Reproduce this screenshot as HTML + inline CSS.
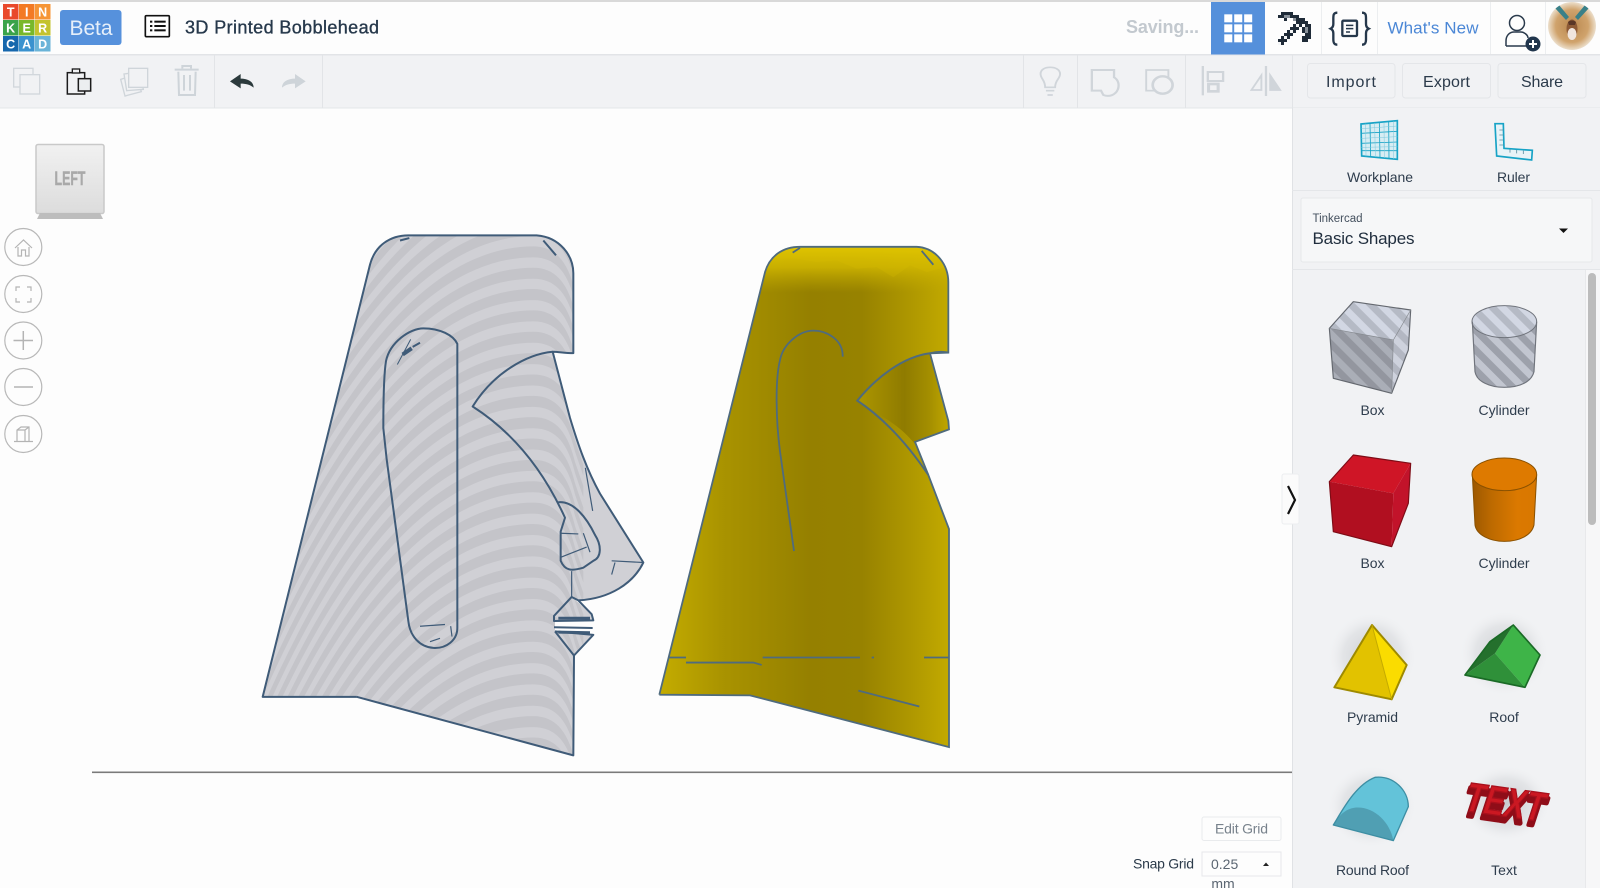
<!DOCTYPE html>
<html>
<head>
<meta charset="utf-8">
<title>3D Printed Bobblehead</title>
<style>
html,body{margin:0;padding:0;width:1600px;height:888px;overflow:hidden;background:#fdfdfd}
svg{display:block;position:absolute;left:0;top:0}
text{font-family:"Liberation Sans",sans-serif}
</style>
</head>
<body>
<svg width="1600" height="888" viewBox="0 0 1600 888" xmlns="http://www.w3.org/2000/svg">
<defs>
  <path id="band" d="M-100,1180C130,560 450,0 850,0C920,0 955,50 975,130L1000,200L1000,232L975,162C955,80 920,32 850,32C450,32 130,592 -100,1212Z"/>
  <clipPath id="greyClip"><path d="M38,1370L360,115C375,60 420,30 475,30L860,30C930,35 970,90 970,140L970,372C945,372 925,368 908,368L960,560C985,640 1010,710 1050,780L1180,980C1150,1040 1080,1085 985,1090L965,1080L1025,1130L1030,1148L915,1150L915,1180L1030,1190L972,1250L970,1540L320,1370Z"/></clipPath>
  <linearGradient id="yel" gradientUnits="userSpaceOnUse" x1="28" y1="0" x2="897" y2="0">
    <stop offset="0" stop-color="#c4ac00"/><stop offset=".22" stop-color="#a99300"/><stop offset=".52" stop-color="#958000"/><stop offset=".7" stop-color="#978200"/><stop offset=".88" stop-color="#b09900"/><stop offset="1" stop-color="#c2aa00"/>
  </linearGradient>
  <linearGradient id="cap" x1="0" y1="0" x2="0" y2="1">
    <stop offset="0" stop-color="#e0c500"/><stop offset=".45" stop-color="#d0b600" stop-opacity=".85"/><stop offset="1" stop-color="#c0a800" stop-opacity="0"/>
  </linearGradient>
  <linearGradient id="sock" gradientUnits="userSpaceOnUse" x1="630" y1="0" x2="895" y2="0">
    <stop offset="0" stop-color="#ab9500"/><stop offset=".5" stop-color="#8f7b00"/><stop offset=".78" stop-color="#a38e00"/><stop offset="1" stop-color="#bfa600"/>
  </linearGradient>
  <linearGradient id="cube" x1="0" y1="0" x2="0" y2="1"><stop offset="0" stop-color="#f1f1f1"/><stop offset="1" stop-color="#dcdcdc"/></linearGradient>
  <pattern id="stT" width="42" height="42" patternUnits="userSpaceOnUse" patternTransform="rotate(-45)"><rect width="42" height="42" fill="#d2d7e3"/><rect width="21" height="42" fill="#b5bac5"/></pattern>
  <pattern id="stL" width="42" height="42" patternUnits="userSpaceOnUse" patternTransform="rotate(-45)"><rect width="42" height="42" fill="#aaaeb7"/><rect width="21" height="42" fill="#93969f"/></pattern>
  <pattern id="stR" width="42" height="42" patternUnits="userSpaceOnUse" patternTransform="rotate(-45)"><rect width="42" height="42" fill="#ced2dd"/><rect width="21" height="42" fill="#b3b7c2"/></pattern>
  <pattern id="stC" width="42" height="42" patternUnits="userSpaceOnUse" patternTransform="rotate(-45)"><rect width="42" height="42" fill="#c2c6d0"/><rect width="21" height="42" fill="#9da1ab"/></pattern>
  <linearGradient id="org" x1="0" y1="0" x2="1" y2="0"><stop offset="0" stop-color="#9c5800"/><stop offset=".3" stop-color="#bd6a00"/><stop offset=".7" stop-color="#db7900"/><stop offset="1" stop-color="#d87700"/></linearGradient>
  <radialGradient id="halo"><stop offset="0" stop-color="#c4c6ca" stop-opacity=".9"/><stop offset=".65" stop-color="#d8dadd" stop-opacity=".55"/><stop offset="1" stop-color="#f1f2f4" stop-opacity="0"/></radialGradient>
  <radialGradient id="fur"><stop offset="0" stop-color="#b9874f"/><stop offset=".68" stop-color="#d0a36c"/><stop offset="1" stop-color="#ecdfcc"/></radialGradient>
  <clipPath id="av"><circle cx="1572" cy="26" r="24"/></clipPath>
</defs>

<!-- backgrounds -->
<rect width="1600" height="888" fill="#fdfdfd"/>
<rect x="0" y="0" width="1600" height="55" fill="#fdfdfd"/>
<rect x="0" y="0" width="1600" height="2" fill="#d9d9d9"/>
<rect x="0" y="55" width="1600" height="53" fill="#f1f2f4"/>
<rect x="0" y="54" width="1600" height="1.5" fill="#e2e4e7"/>
<rect x="0" y="107.500" width="1600" height="1" fill="#e4e6e9"/>
<rect x="214" y="55" width="1" height="53" fill="#e2e4e7"/>
<rect x="322" y="55" width="1" height="53" fill="#e2e4e7"/>
<rect x="1023" y="55" width="1" height="53" fill="#e2e4e7"/>
<rect x="1077" y="55" width="1" height="53" fill="#e2e4e7"/>
<rect x="1185" y="55" width="1" height="53" fill="#e2e4e7"/>
<rect x="1292" y="55" width="1" height="53" fill="#e2e4e7"/>
<rect x="1321" y="2" width="1" height="52" fill="#eceef0"/>
<rect x="1377" y="2" width="1" height="52" fill="#eceef0"/>
<rect x="1490" y="2" width="1" height="52" fill="#eceef0"/>
<rect x="1545" y="2" width="1" height="52" fill="#eceef0"/>

<!-- logo -->
<g font-weight="700" font-size="12.500" fill="#fff" text-anchor="middle">
  <rect x="3" y="4" width="15.500" height="15.500" fill="#e9492c"/><text x="10.700" y="16.500">T</text>
  <rect x="19" y="4" width="15.500" height="15.500" fill="#f37a24"/><text x="26.700" y="16.500">I</text>
  <rect x="35" y="4" width="15.500" height="15.500" fill="#f69536"/><text x="42.700" y="16.500">N</text>
  <rect x="3" y="20" width="15.500" height="15.500" fill="#3aa34a"/><text x="10.700" y="32.500">K</text>
  <rect x="19" y="20" width="15.500" height="15.500" fill="#78b82a"/><text x="26.700" y="32.500">E</text>
  <rect x="35" y="20" width="15.500" height="15.500" fill="#c4c32e"/><text x="42.700" y="32.500">R</text>
  <rect x="3" y="36" width="15.500" height="15.500" fill="#1667ad"/><text x="10.700" y="48.500">C</text>
  <rect x="19" y="36" width="15.500" height="15.500" fill="#3a92cf"/><text x="26.700" y="48.500">A</text>
  <rect x="35" y="36" width="15.500" height="15.500" fill="#6ab4d8"/><text x="42.700" y="48.500">D</text>
</g>
<rect x="60" y="10" width="61.500" height="35" rx="3" fill="#5691dc"/>
<text x="69.500" y="35" font-size="21" fill="#e6effa" textLength="43" lengthAdjust="spacing">Beta</text>

<text x="185" y="33.500" font-size="18" fill="#26384b" stroke="#26384b" stroke-width=".35" textLength="194" lengthAdjust="spacing">3D Printed Bobblehead</text>

<!-- left header + toolbar icons, zoom coords -->
<g transform="scale(.33333)">
  <!-- list icon -->
  <rect x="436" y="47" width="72" height="63" rx="3" fill="#fff" stroke="#111" stroke-width="5"/>
  <g fill="#111">
    <rect x="450" y="62" width="7" height="6"/><rect x="463" y="62" width="34" height="6"/>
    <rect x="450" y="75" width="7" height="6"/><rect x="463" y="75" width="34" height="6"/>
    <rect x="450" y="88" width="7" height="6"/><rect x="463" y="88" width="34" height="6"/>
  </g>
  <!-- copy -->
  <g fill="none" stroke="#d2d7dc" stroke-width="4">
    <rect x="41" y="205" width="58" height="56"/>
    <rect x="60" y="224" width="59" height="58" fill="#f1f2f4"/>
  </g>
  <!-- paste -->
  <rect x="202" y="218" width="52" height="64" fill="none" stroke="#1c1c1c" stroke-width="4.500"/>
  <rect x="217" y="207" width="22" height="12" fill="#f1f2f4" stroke="#1c1c1c" stroke-width="4"/>
  <rect x="235" y="236" width="37" height="37" fill="#eceef0" stroke="#1c1c1c" stroke-width="4.500"/>
  <!-- duplicate -->
  <g fill="#f1f2f4" stroke="#cfd5da" stroke-width="4">
    <path d="M362,238L407,224L424,275L375,288Z"/>
    <path d="M372,222L420,215L430,268L380,272Z"/>
    <rect x="386" y="205" width="57" height="57"/>
  </g>
  <!-- trash -->
  <g fill="none" stroke="#ced4d9" stroke-width="6">
    <path d="M535,215L537,285L585,285L587,215"/>
    <path d="M524,209L596,209"/>
    <path d="M547,206L547,198L573,198L573,206"/>
    <path d="M552,225L552,272M570,225L570,272"/>
  </g>
  <!-- undo/redo -->
  <path d="M690,244L722,222L722,236C745,236 761,246 761,263C750,254 738,251 722,251L722,265Z" fill="#2c3a3c"/>
  <path d="M917,244L885,222L885,236C862,236 846,246 846,263C857,254 869,251 885,251L885,265Z" fill="#ced4d9"/>
</g>

<!-- header right text -->
<text x="1126" y="33" font-size="18" font-weight="700" fill="#c3c9cf" textLength="73" lengthAdjust="spacing">Saving...</text>
<rect x="1211" y="2" width="54" height="52.500" fill="#5590db"/>
<text x="1387.500" y="33.500" font-size="17" fill="#4b87d6" textLength="91" lengthAdjust="spacing">What's New</text>

<g transform="translate(1000,0) scale(.38270,.33333)">
  <!-- grid -->
  <g fill="#fff">
    <rect x="586" y="43" width="21" height="24"/><rect x="612" y="43" width="21" height="24"/><rect x="638" y="43" width="21" height="24"/>
    <rect x="586" y="73" width="21" height="24"/><rect x="612" y="73" width="21" height="24"/><rect x="638" y="73" width="21" height="24"/>
    <rect x="586" y="103" width="21" height="24"/><rect x="612" y="103" width="21" height="24"/><rect x="638" y="103" width="21" height="24"/>
  </g>
</g>

<!-- pixel pickaxe: 1 unit = 3px -->
<g transform="translate(1278,12) scale(3)" shape-rendering="crispEdges">
  <path fill="#1f2b38" d="M1 0h4v1h-4zM0 1h2v1h-2zM4 1h3v1h-3zM2 2h1v1h-1zM6 2h3v1h-3zM8 3h2v1h-2zM9 4h2v1h-2zM10 5h1v4h-1zM8 5h1v2h-1zM9 7h1v3h-1zM8 8h1v2h-1z"/>
  <path fill="#8a929b" d="M2 1h2v1h-2zM5 2h1v1h-1zM7 3h1v1h-1zM9 5h1v2h-1z"/>
  <path fill="#1f2b38" d="M6 3h2v2h-2zM5 4h2v2h-2zM4 5h2v2h-2zM3 6h2v2h-2zM2 7h2v2h-2zM1 8h2v2h-2zM0 9h2v2h-2z"/>
  <path fill="#f4f5f6" d="M6 4h1v1h-1zM4 6h1v1h-1zM2 8h1v1h-1zM0 10h1v1h-1z"/>
</g>

<!-- code blocks -->
<g transform="translate(1260,0) scale(.33333)">
  <g fill="none" stroke="#26384b" stroke-width="7">
    <path d="M232,38C220,38 220,46 220,56L220,72C220,80 216,84 212,86C216,88 220,92 220,100L220,118C220,128 222,134 232,134"/>
    <path d="M306,38C318,38 318,46 318,56L318,72C318,80 322,84 326,86C322,88 318,92 318,100L318,118C318,128 316,134 306,134"/>
    <rect x="247" y="62" width="44" height="46" rx="3"/>
  </g>
  <path d="M258,76L280,76M258,86L280,86M258,96L270,96" stroke="#26384b" stroke-width="4.500"/>
</g>

<!-- user icon -->
<g fill="none" stroke="#2a3a4c" stroke-width="1.500">
  <circle cx="1517" cy="23" r="7.500"/>
  <path d="M1506,46L1506,41C1506,35 1510,32 1514,32L1521,32C1524,32 1528,35 1528,38"/>
  <path d="M1506,46L1527,46"/>
</g>
<circle cx="1533" cy="44" r="7.500" fill="#21364d"/>
<path d="M1533,40L1533,48M1529,44L1537,44" stroke="#fff" stroke-width="2"/>

<!-- avatar -->
<g clip-path="url(#av)">
  <rect x="1546" y="2" width="54" height="52" fill="#f3eee7"/>
  <circle cx="1572" cy="26" r="24" fill="url(#fur)"/>
  <path d="M1559,5L1569,17L1566,20L1555,8Z" fill="#3a8088"/>
  <path d="M1585,5L1575,17L1578,20L1589,8Z" fill="#3a8088"/>
  <ellipse cx="1572" cy="29" rx="5.500" ry="9.500" fill="#8d5a36"/>
  <ellipse cx="1572" cy="34" rx="4.500" ry="6" fill="#f0e5de"/>
  <path d="M1568,22C1570,20 1574,20 1576,22L1575,25L1569,25Z" fill="#5a3626"/>
</g>

<!-- right toolbar icons -->
<g transform="translate(1000,0) scale(.38270,.33333)" fill="none" stroke="#d0d5da" stroke-width="5">
  <!-- bulb -->
  <path d="M118,262C118,240 106,236 106,222C106,208 118,202 131,202C144,202 157,208 157,222C157,236 144,240 144,262Z" stroke-width="5"/>
  <path d="M120,272L142,272M124,285L138,285" stroke-width="5"/>
  <!-- solid -->
  <path d="M240,210L298,210L298,232C310,240 312,255 308,268C302,285 285,292 270,285L264,272L240,272Z" stroke-width="6"/>
  <!-- hole -->
  <rect x="382" y="210" width="58" height="62" stroke-width="5"/>
  <circle cx="425" cy="255" r="26" fill="#f1f2f4" stroke-width="7"/>
  <!-- align -->
  <path d="M530,198L530,286" stroke-width="6"/>
  <rect x="543" y="216" width="40" height="27" stroke-width="6"/>
  <rect x="545" y="252" width="25" height="22" stroke-width="8"/>
  <!-- mirror -->
  <path d="M695,198L695,288" stroke-width="6"/>
  <path d="M683,226L683,270L657,270Z" stroke-width="5"/>
  <path d="M706,226L706,270L732,270Z" fill="#d0d5da" stroke-width="5"/>
</g>

<!-- buttons -->
<g fill="#f1f2f4" stroke="#e4e6e9" stroke-width="1">
  <rect x="1307.500" y="63.500" width="87.500" height="34.500" rx="3"/>
  <rect x="1402.500" y="63.500" width="88" height="34.500" rx="3"/>
  <rect x="1498" y="63.500" width="88" height="34.500" rx="3"/>
</g>
<g font-size="16" fill="#2b3a4a">
  <text x="1326" y="87" textLength="50" lengthAdjust="spacing">Import</text>
  <text x="1423" y="87" textLength="47" lengthAdjust="spacing">Export</text>
  <text x="1521" y="87" textLength="42" lengthAdjust="spacing">Share</text>
</g>

<!-- view cube -->
<rect x="36" y="144.500" width="68" height="69" rx="2" fill="url(#cube)" stroke="#c9c9c9" stroke-width="1.500"/>
<path d="M40,213L100,213L103,219L37,219Z" fill="#bdbdbd"/>
<text x="70" y="185" font-size="19" font-weight="700" fill="#a9a9a9" stroke="#a9a9a9" stroke-width=".4" text-anchor="middle" textLength="31" lengthAdjust="spacingAndGlyphs">LEFT</text>

<!-- view buttons -->
<g fill="#fdfdfd" stroke="#b8b8b8" stroke-width="1.200">
  <circle cx="23.300" cy="247" r="18.500"/>
  <circle cx="23.300" cy="294" r="18.500"/>
  <circle cx="23.300" cy="340.500" r="18.500"/>
  <circle cx="23.300" cy="387" r="18.500"/>
  <circle cx="23.300" cy="434" r="18.500"/>
</g>
<g fill="none" stroke="#b4b4b4" stroke-width="1.200">
  <path d="M15,248L23.500,240L32,248M18,247L18,256L21.500,256L21.500,250L25.500,250L25.500,256L29,256L29,247"/>
  <path d="M16,291L16,287L20,287M27,287L31,287L31,291M16,298L16,302L20,302M27,302L31,302L31,298"/>
  <path d="M23.300,331L23.300,350M13.500,340.500L33,340.500" stroke-width="1.500"/>
  <path d="M14,387L33,387" stroke-width="1.500"/>
  <path d="M17,441L17,430L21,427L29,427L29,441M17,430L25,430L29,427M25,430L25,441M14,441.500L33,441.500"/>
</g>

<!-- ground line -->
<rect x="92" y="771.500" width="1200" height="1.600" fill="#7a7a7a"/>

<!-- grey hole model -->
<g transform="translate(250,225) scale(.33333,.34440)">
  <g clip-path="url(#greyClip)">
    <rect x="0" y="0" width="1230" height="1600" fill="#d0d0d5"/>
    <g fill="#c4c4c9">
      <use href="#band" y="-310"/><use href="#band" y="-248"/><use href="#band" y="-186"/><use href="#band" y="-124"/><use href="#band" y="-62"/><use href="#band" y="0"/><use href="#band" y="62"/><use href="#band" y="124"/><use href="#band" y="186"/><use href="#band" y="248"/><use href="#band" y="310"/><use href="#band" y="372"/><use href="#band" y="434"/><use href="#band" y="496"/><use href="#band" y="558"/><use href="#band" y="620"/><use href="#band" y="682"/><use href="#band" y="744"/><use href="#band" y="806"/><use href="#band" y="868"/><use href="#band" y="930"/><use href="#band" y="992"/><use href="#band" y="1054"/><use href="#band" y="1116"/><use href="#band" y="1178"/><use href="#band" y="1240"/><use href="#band" y="1302"/><use href="#band" y="1364"/><use href="#band" y="1426"/><use href="#band" y="1488"/>
    </g>
  </g>
  <g fill="none" stroke="#3f5b78" stroke-linejoin="round">
    <path vector-effect="non-scaling-stroke" stroke-width="2" d="M320,1370L38,1370L360,115C375,60 420,30 475,30L860,30C930,35 970,90 970,140L970,372C945,372 925,368 908,368L960,560C985,640 1010,710 1050,780L1180,980C1150,1040 1080,1085 985,1090L965,1080L912,1135L912,1150L1030,1148L1025,1130L985,1090M912,1168L1028,1170M915,1180L1030,1190L972,1250L915,1180M972,1250L970,1540L320,1370"/>
    <path vector-effect="non-scaling-stroke" stroke-width="2" d="M622,345L622,1170C622,1205 590,1230 550,1228C510,1225 480,1195 475,1150L410,680L400,590C400,500 402,430 408,395C420,340 480,300 520,300C570,300 610,320 622,345Z"/>
    <path vector-effect="non-scaling-stroke" stroke-width="2" d="M908,368C830,375 730,430 668,527C770,590 870,690 945,850L932,890L932,975C945,1005 965,1005 1000,995L1030,975C1055,965 1055,930 1035,900C1010,850 970,800 925,805"/>
    <path vector-effect="non-scaling-stroke" stroke-width="1.200" d="M932,895L985,897M1000,895L1020,950M932,965L1010,935M1006,705L1028,830M965,1005L965,1080M1085,975L1180,980M1095,980L1085,1015M510,1165L585,1160M602,1165L606,1195M540,1210L570,1200"/>
    <path vector-effect="non-scaling-stroke" stroke-width="2" d="M880,45L918,88M450,45L478,38"/>
    <path vector-effect="non-scaling-stroke" stroke-width="1" d="M482,332L442,405"/>
    <path vector-effect="non-scaling-stroke" stroke-width="4" d="M458,376L485,358"/>
    <path vector-effect="non-scaling-stroke" stroke-width="2" d="M488,354L510,342"/>
    <path vector-effect="non-scaling-stroke" stroke-width="3" d="M925,1142L1020,1142M925,1182L1020,1184"/>
  </g>
</g>

<!-- yellow model -->
<g transform="translate(650,235) scale(.33333,.33800)">
  <path d="M28,1360L345,110C360,60 400,35 450,35L800,35C860,38 895,90 895,140L895,348L840,350L895,550L897,575L795,612L835,710L897,870L897,1515L300,1362Z" fill="url(#yel)"/>
  <path d="M345,110C360,60 400,35 450,35L800,35C860,38 895,90 895,140L895,170L333,170Z" fill="url(#cap)"/>
  <path d="M370,70C390,45 420,36 450,36L800,36C840,38 870,60 885,95L830,110L780,90L730,125L680,95L620,100L560,75L500,80L440,70Z" fill="#dcc100" opacity=".22"/>
  <path d="M622,490C680,420 760,360 840,350L895,550L897,575L795,612L800,625C750,560 690,535 622,490Z" fill="url(#sock)"/>
  <g fill="none" stroke="#4f6b7e">
    <path vector-effect="non-scaling-stroke" stroke-width="1.800" d="M28,1360L345,110C360,60 400,35 450,35L800,35C860,38 895,90 895,140L895,348L840,350M840,350L895,550L897,575L795,612L835,710L897,870L897,1515L300,1362L28,1360"/>
    <path vector-effect="non-scaling-stroke" stroke-width="2" d="M895,348C880,345 860,345 840,350C760,360 680,420 622,490C690,535 760,600 835,710"/>
    <path vector-effect="non-scaling-stroke" stroke-width="1.800" d="M432,935L390,640C378,550 375,430 390,370C400,320 450,283 490,283C530,283 580,310 578,360"/>
    <path vector-effect="non-scaling-stroke" stroke-width="1.800" d="M428,52L450,38M815,47L850,88M55,1250L108,1250M108,1265L310,1265L335,1272M338,1250L630,1250M665,1250L672,1250M822,1250L897,1250M625,1348L808,1395"/>
  </g>
</g>

<!-- right panel -->
<rect x="1292" y="108" width="308" height="780" fill="#f1f2f4"/>
<rect x="1292" y="108" width="1" height="780" fill="#e0e2e5"/>
<rect x="1292" y="190" width="308" height="1" fill="#e4e6e9"/>
<rect x="1292" y="269" width="308" height="1" fill="#e4e6e9"/>
<rect x="1301" y="198" width="291" height="64" rx="2" fill="#f6f7f8" stroke="#e6e8ea"/>
<text x="1312.500" y="222" font-size="11.500" fill="#44505e" textLength="50" lengthAdjust="spacing">Tinkercad</text>
<text x="1312.500" y="244" font-size="17" fill="#1f2d3d" textLength="102" lengthAdjust="spacing">Basic Shapes</text>
<path d="M1559,228.500L1568,228.500L1563.500,233Z" fill="#111"/>
<rect x="1585" y="270" width="15" height="618" fill="#f7f7f8"/>
<rect x="1585" y="270" width="1" height="618" fill="#e8e9eb"/>
<rect x="1588" y="273" width="8" height="252" rx="4" fill="#bcbcbc"/>

<!-- tools & shapes top (zoom6 coords) -->
<g transform="translate(1290,110) scale(.33333)">
  <!-- workplane -->
  <path d="M213,42L322,32L322,148L215,138Z" fill="#d7edf3" stroke="#17a3c6" stroke-width="5"/>
  <path d="M240,40L242,140M268,38L270,143M296,35L297,145M214,70L322,64M214,100L322,96M215,122L322,122" stroke="#17a3c6" stroke-width="2.500" fill="none"/>
  <path d="M227,41L228,139M254,39L256,141M282,37L283,144M310,34L310,147M214,56L322,48M214,85L322,80M214,112L322,110" stroke="#7cc8dc" stroke-width="1.500" fill="none"/>
  <!-- ruler -->
  <path d="M615,41L640,41L642,115L727,121L725,150L620,138Z" fill="#e8f3f7" stroke="#17a3c6" stroke-width="5"/>
  <path d="M628,60L640,60M628,75L640,75M628,90L640,90M628,105L640,105M660,128L660,118M680,130L680,120M700,132L700,122" stroke="#5c8fa0" stroke-width="2.500"/>
  <!-- grey box -->
  <path d="M190,575L362,600L310,690L118,655Z" fill="url(#stT)"/>
  <path d="M118,655L310,690L305,850L130,805Z" fill="url(#stL)"/>
  <path d="M310,690L362,600L355,720L305,850Z" fill="url(#stR)"/>
  <path d="M190,575L362,600L355,720L305,850L130,805L118,655Z" fill="none" stroke="#64686f" stroke-width="3.500" stroke-linejoin="round"/>
  <path d="M118,655L310,690L362,600M310,690L305,850" fill="none" stroke="#85898f" stroke-width="2" stroke-linejoin="round"/>
  <!-- grey cylinder -->
  <path d="M547,635L555,785C560,815 600,832 643,832C690,832 725,815 732,785L740,635Z" fill="url(#stC)"/>
  <ellipse cx="643" cy="635" rx="97" ry="48" fill="url(#stT)"/>
  <path d="M547,635L555,785C560,815 600,832 643,832C690,832 725,815 732,785L740,635" fill="none" stroke="#70747c" stroke-width="3.500"/>
  <ellipse cx="643" cy="635" rx="97" ry="48" fill="none" stroke="#70747c" stroke-width="3"/>
</g>
<g font-size="14" fill="#2f3d4d" text-anchor="middle">
  <text x="1380" y="182" textLength="66" lengthAdjust="spacing">Workplane</text>
  <text x="1513.500" y="182" textLength="33" lengthAdjust="spacing">Ruler</text>
  <text x="1372.500" y="415">Box</text>
  <text x="1504" y="415" textLength="51" lengthAdjust="spacing">Cylinder</text>
  <text x="1372.500" y="568">Box</text>
  <text x="1504" y="568" textLength="51" lengthAdjust="spacing">Cylinder</text>
  <text x="1372.500" y="722" textLength="51" lengthAdjust="spacing">Pyramid</text>
  <text x="1504" y="722">Roof</text>
  <text x="1372.500" y="875" textLength="73" lengthAdjust="spacing">Round Roof</text>
  <text x="1504" y="875">Text</text>
</g>

<!-- shapes lower (zoom7 coords) -->
<g transform="translate(1290,430) scale(.33333)">
  <!-- halos -->
  <ellipse cx="246" cy="680" rx="135" ry="135" fill="url(#halo)"/>
  <ellipse cx="643" cy="670" rx="135" ry="130" fill="url(#halo)"/>
  <ellipse cx="245" cy="1130" rx="135" ry="125" fill="url(#halo)"/>
  <ellipse cx="648" cy="1120" rx="135" ry="115" fill="url(#halo)"/>
  <!-- red box -->
  <path d="M190,75L362,100L310,190L118,155Z" fill="#cf1526"/>
  <path d="M118,155L310,190L305,350L130,305Z" fill="#b10f20"/>
  <path d="M310,190L362,100L355,220L305,350Z" fill="#c2132a"/>
  <path d="M190,75L362,100L355,220L305,350L130,305L118,155Z" fill="none" stroke="#7e0c16" stroke-width="3.500" stroke-linejoin="round"/>
  <!-- orange cylinder -->
  <path d="M547,135L555,285C560,315 600,334 643,334C690,334 725,315 732,285L740,135Z" fill="url(#org)" stroke="#8a5100" stroke-width="3"/>
  <ellipse cx="643" cy="133" rx="97" ry="49" fill="#de7a00" stroke="#8a5100" stroke-width="3"/>
  <!-- pyramid -->
  <path d="M246,585L133,772L305,808Z" fill="#e2c200"/>
  <path d="M246,585L350,705L305,808Z" fill="#fadc00"/>
  <path d="M246,585L133,772L305,808L350,705Z" fill="none" stroke="#9e8a00" stroke-width="6" stroke-linejoin="round"/>
  <path d="M246,585L305,808" fill="none" stroke="#c4aa00" stroke-width="3"/>
  <!-- roof -->
  <path d="M670,585L750,675L705,772L615,670Z" fill="#3eb448"/>
  <path d="M525,735L615,670L705,772Z" fill="#2f9039"/>
  <path d="M525,735L600,635L670,585L615,670Z" fill="#24702d"/>
  <path d="M670,585L750,675L705,772L525,735L600,635Z" fill="none" stroke="#1a6a26" stroke-width="5" stroke-linejoin="round"/>
  <!-- round roof -->
  <path d="M130,1185C155,1145 195,1065 255,1042C310,1036 355,1080 355,1130L310,1232L130,1185Z" fill="#63c3d9"/>
  <path d="M130,1185C145,1158 165,1137 195,1133C250,1128 300,1175 310,1232Z" fill="#509fb3"/>
  <path d="M130,1185C155,1145 195,1065 255,1042C310,1036 355,1080 355,1130L310,1232Z" fill="none" stroke="#3d8ea3" stroke-width="4" stroke-linejoin="round"/>
  <!-- text shape -->
  <g font-weight="700" font-size="124">
    <text transform="translate(512,1155) rotate(8) skewX(-10)" fill="#8f0d18" stroke="#8f0d18" stroke-width="14" stroke-linejoin="round" textLength="240" lengthAdjust="spacingAndGlyphs">TEXT</text>
    <text transform="translate(516,1141) rotate(8) skewX(-10)" fill="#cb1822" stroke="#a8101c" stroke-width="4" textLength="238" lengthAdjust="spacingAndGlyphs">TEXT</text>
  </g>
</g>

<!-- collapse tab -->
<rect x="1282" y="474" width="17" height="50" rx="2" fill="#fbfbfb" stroke="#eceef0"/>
<path d="M1288,486L1295,500L1288,514" fill="none" stroke="#111" stroke-width="2.200"/>

<!-- grid controls -->
<rect x="1202" y="817" width="79" height="23.500" rx="2" fill="#fdfdfd" stroke="#e9ebed"/>
<text x="1241.500" y="833.500" font-size="14" fill="#78828c" text-anchor="middle" textLength="53" lengthAdjust="spacing">Edit Grid</text>
<text x="1194" y="868.500" font-size="14" fill="#2b3a4a" text-anchor="end" textLength="61" lengthAdjust="spacing">Snap Grid</text>
<rect x="1202" y="852" width="79" height="24" fill="#fdfdfd" stroke="#e6e8ea"/>
<text x="1211" y="869" font-size="14" fill="#5b6672">0.25</text>
<path d="M1263,866L1269,866L1266,862.500Z" fill="#222"/>
<text x="1223" y="888.500" font-size="14" fill="#5b6672" text-anchor="middle">mm</text>
</svg>
</body>
</html>
